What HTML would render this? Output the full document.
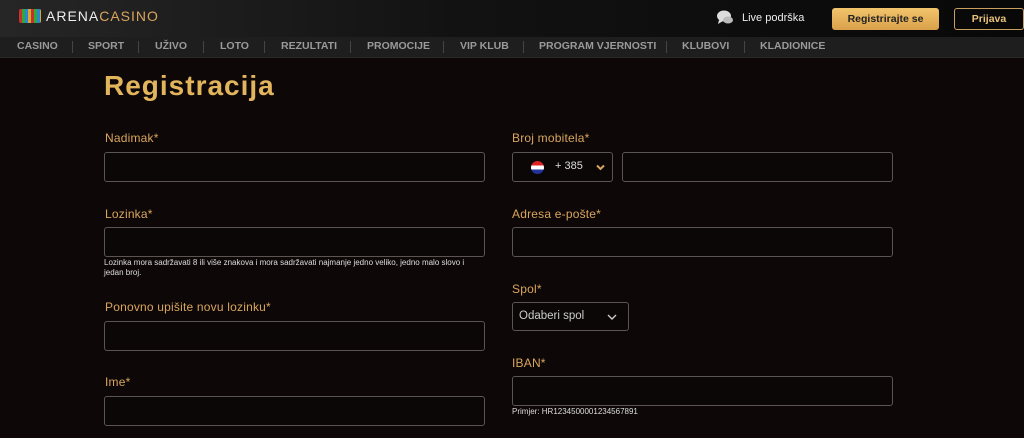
<!DOCTYPE html>
<html><head><meta charset="utf-8"><style>
*{margin:0;padding:0;box-sizing:border-box}
body{width:1024px;height:438px;overflow:hidden;background:#0d0807;font-family:"Liberation Sans",sans-serif;position:relative}
.top{position:absolute;left:0;top:0;width:1024px;height:37px;background:linear-gradient(90deg,#262626 0%,#121212 45%,#080808 100%)}
.nav{position:absolute;left:0;top:37px;width:1024px;height:21px;background:#1e1e1e;border-bottom:1px solid #2a2a2a}
.nav span{position:absolute;top:3px;font-size:10.5px;font-weight:bold;color:#9a9a9a}
.nav i{position:absolute;top:4px;width:1px;height:12px;background:#444}
.abs{position:absolute}
.lbl{position:absolute;font-size:12px;color:#d9a55e;letter-spacing:.2px}
.in{position:absolute;height:30px;border:1px solid #5a5550;border-radius:3px;background:#0b0706}
.hint{position:absolute;font-size:8px;color:#ddd;line-height:10px}
</style></head><body>
<div class="top">
 <div class="abs" style="left:19px;top:9px;width:22px;height:14px;background:repeating-linear-gradient(90deg,#e33 0 3px,#3c3 3px 6px,#39f 6px 9px,#fc3 9px 12px);opacity:.8;border-radius:2px"></div>
 <div class="abs" style="left:46px;top:8px;font-size:14px;letter-spacing:1px;color:#eee">ARENA<span style="color:#d9a55e">CASINO</span></div>
 <svg class="abs" style="left:716px;top:9px" width="18" height="18" viewBox="0 0 18 18"><ellipse cx="8" cy="7" rx="7" ry="5.5" fill="#ddd"/><path d="M3 11 L2 15 L7 12Z" fill="#ddd"/><ellipse cx="12" cy="11" rx="5" ry="3.5" fill="#bbb"/></svg>
 <div class="abs" style="left:742px;top:12px;font-size:11px;color:#eee">Live podrška</div>
 <div class="abs" style="left:832px;top:8px;width:107px;height:22px;border-radius:3px;background:linear-gradient(#f2c56c,#d9a04a);font-size:10.5px;font-weight:bold;color:#222;text-align:center;line-height:22px">Registrirajte se</div>
 <div class="abs" style="left:954px;top:8px;width:70px;height:22px;border-radius:3px;border:1px solid #c9a060;font-size:10.5px;font-weight:bold;color:#e8c37a;text-align:center;line-height:20px">Prijava</div>
</div>
<div class="nav">
 <span style="left:17px">CASINO</span><i style="left:72px"></i>
 <span style="left:88px">SPORT</span><i style="left:138px"></i>
 <span style="left:155px">UŽIVO</span><i style="left:203px"></i>
 <span style="left:220px">LOTO</span><i style="left:264px"></i>
 <span style="left:281px">REZULTATI</span><i style="left:350px"></i>
 <span style="left:367px">PROMOCIJE</span><i style="left:443px"></i>
 <span style="left:460px">VIP KLUB</span><i style="left:523px"></i>
 <span style="left:539px">PROGRAM VJERNOSTI</span><i style="left:666px"></i>
 <span style="left:682px">KLUBOVI</span><i style="left:744px"></i>
 <span style="left:760px">KLADIONICE</span>
</div>
<div class="abs" style="left:104px;top:70px;font-size:28px;font-weight:bold;color:#e2b45c;letter-spacing:1px">Registracija</div>
<div class="lbl" style="left:105px;top:131px">Nadimak*</div>
<div class="in" style="left:104px;top:152px;width:381px"></div>
<div class="lbl" style="left:105px;top:207px">Lozinka*</div>
<div class="in" style="left:104px;top:227px;width:381px"></div>
<div class="hint" style="left:104px;top:258px;width:372px">Lozinka mora sadržavati 8 ili više znakova i mora sadržavati najmanje jedno veliko, jedno malo slovo i jedan broj.</div>
<div class="lbl" style="left:105px;top:300px">Ponovno upišite novu lozinku*</div>
<div class="in" style="left:104px;top:321px;width:381px"></div>
<div class="lbl" style="left:105px;top:375px">Ime*</div>
<div class="in" style="left:104px;top:396px;width:381px"></div>

<div class="lbl" style="left:512px;top:131px">Broj mobitela*</div>
<div class="in" style="left:512px;top:152px;width:101px">
 <div class="abs" style="left:18px;top:8px;width:13px;height:13px;border-radius:50%;background:linear-gradient(#d22 0 35%,#fff 35% 65%,#239 65%)"></div>
 <div class="abs" style="left:42px;top:7px;font-size:11px;color:#ddd">+ 385</div>
 <svg class="abs" style="left:83px;top:11px" width="9" height="7"><path d="M1 1.5 L4.5 5 L8 1.5" stroke="#d9a55e" stroke-width="2" fill="none"/></svg>
</div>
<div class="in" style="left:622px;top:152px;width:271px"></div>
<div class="lbl" style="left:512px;top:207px">Adresa e-pošte*</div>
<div class="in" style="left:512px;top:227px;width:381px"></div>
<div class="lbl" style="left:512px;top:282px">Spol*</div>
<div class="in" style="left:512px;top:302px;width:117px;height:29px">
 <div class="abs" style="left:6px;top:7px;font-size:11.5px;color:#ccc">Odaberi spol</div>
 <svg class="abs" style="left:94px;top:10px" width="10" height="8"><path d="M1 2 L5 6 L9 2" stroke="#ccc" stroke-width="1.4" fill="none"/></svg>
</div>
<div class="lbl" style="left:512px;top:356px">IBAN*</div>
<div class="in" style="left:512px;top:376px;width:381px"></div>
<div class="hint" style="left:512px;top:407px">Primjer: HR1234500001234567891</div>
</body></html>
